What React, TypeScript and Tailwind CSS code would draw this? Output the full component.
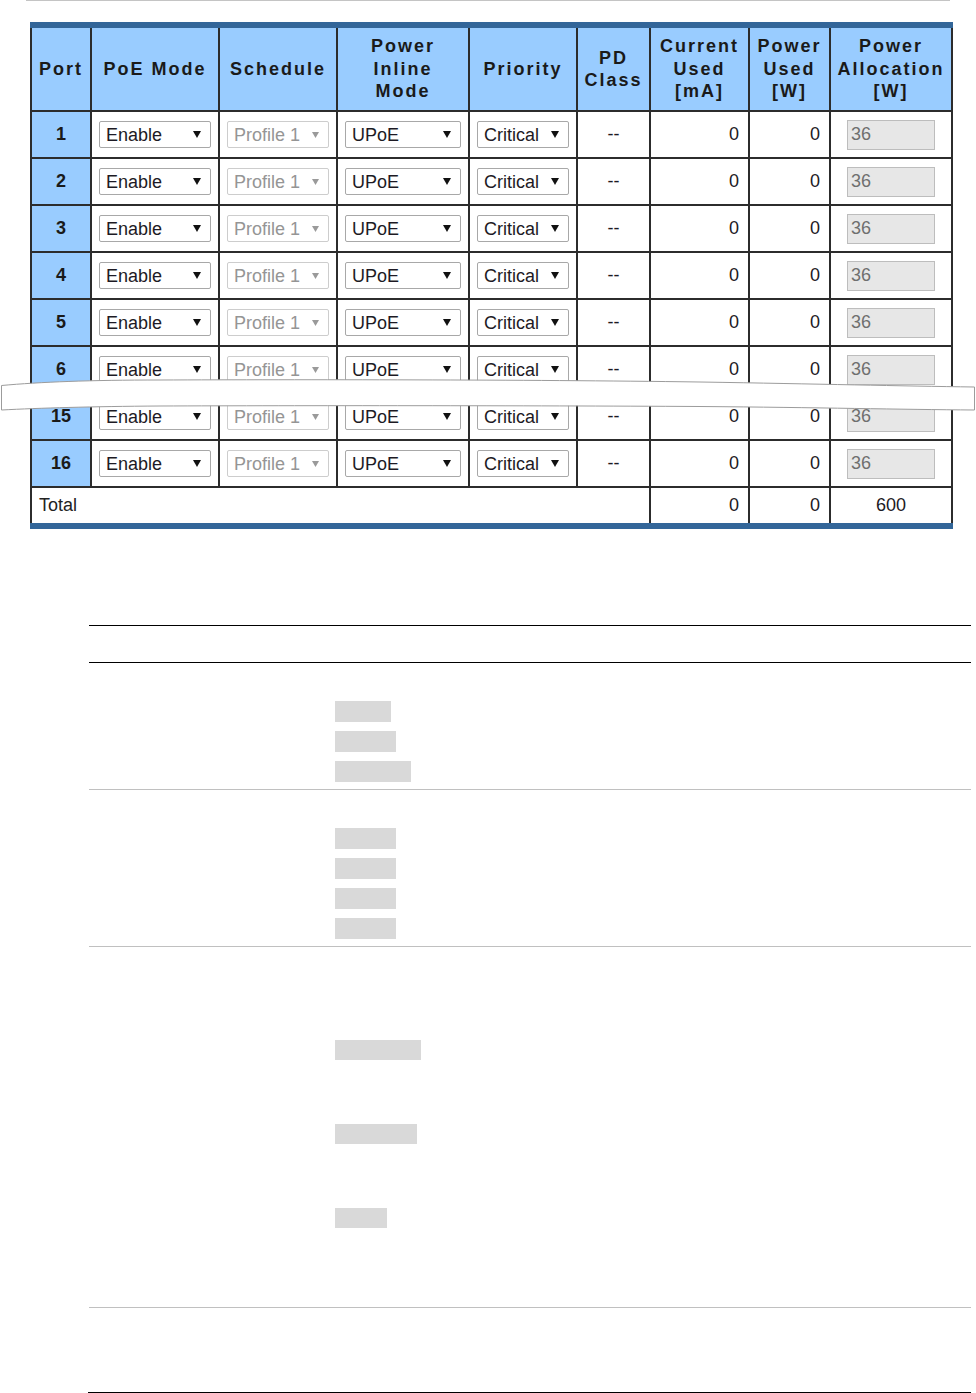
import type { ReactNode } from 'react'

const PORTS = ['1', '2', '3', '4', '5', '6', '15', '16']

const font = "font-['Liberation_Sans',Arial,sans-serif]"

function Arrow({ disabled }: { disabled?: boolean }) {
  return disabled ? (
    <svg width="7" height="6" viewBox="0 0 7 6" className="shrink-0">
      <polygon points="0,0 7,0 3.5,6" fill="#9a9a9a" />
    </svg>
  ) : (
    <svg width="8" height="7" viewBox="0 0 8 7" className="shrink-0">
      <polygon points="0,0 8,0 4,7" fill="#111" />
    </svg>
  )
}

function FakeSelect({ label, width, disabled }: { label: string; width: string; disabled?: boolean }) {
  return (
    <div
      className={[
        'flex h-[27px] items-center justify-between rounded-[2px] border bg-white pl-[6px] pr-[9px]',
        width,
        disabled ? 'border-[#cdcdcd] text-[#959595]' : 'border-[#a8a8a8] text-[#1d1a24]',
      ].join(' ')}
    >
      <span className="leading-none">{label}</span>
      <Arrow disabled={disabled} />
    </div>
  )
}

function Th({ children }: { children: ReactNode }) {
  return (
    <th className="border-2 border-[#2c2c2c] bg-[#99ccff] px-0 text-center align-middle text-[18px] font-bold leading-[22.5px] tracking-[2px] text-[#1a1a1a]">
      {children}
    </th>
  )
}

function Td({ children, className = '', colSpan }: { children?: ReactNode; className?: string; colSpan?: number }) {
  return (
    <td colSpan={colSpan} className={'border-2 border-[#2c2c2c] align-middle ' + className}>
      {children}
    </td>
  )
}

function BreakMark() {
  // torn-paper style cut between row 6 and row 15
  return (
    <svg className="absolute left-0 top-[376px]" width="976" height="38" viewBox="0 0 976 38">
      <path
        d="M1.5 9.5 C 40 6, 90 4, 160 4 C 300 3.5, 520 3.5, 700 6 C 820 8, 900 10, 974.5 11 L 974.5 34 C 900 33.5, 820 31.5, 700 30.5 C 520 29.5, 300 29.5, 160 30 C 90 30.5, 40 32, 1.5 34 Z"
        fill="#ffffff"
        stroke="#9c9c9c"
        strokeWidth="1"
      />
    </svg>
  )
}

function GreyBar({ width }: { width: string }) {
  return <div className={'bg-[#d9d9d9] ' + width} />
}

export default function App() {
  return (
    <div className={'relative min-h-[1393px] w-[976px] bg-white ' + font}>
      <div className="ml-[26px] h-px w-[924px] bg-[#c4c4c4]" />

      <table className="ml-[30px] mt-[21px] w-[921px] table-fixed border-collapse border-x-2 border-y-[6px] border-x-[#2c2c2c] border-y-[#336699]">
        <colgroup>
          <col className="w-[60px]" />
          <col className="w-[128px]" />
          <col className="w-[118px]" />
          <col className="w-[132px]" />
          <col className="w-[108px]" />
          <col className="w-[73px]" />
          <col className="w-[99px]" />
          <col className="w-[81px]" />
          <col className="w-[122px]" />
        </colgroup>
        <thead>
          <tr className="h-[86px]">
            <Th>Port</Th>
            <Th>PoE Mode</Th>
            <Th>Schedule</Th>
            <Th>
              Power
              <br />
              Inline
              <br />
              Mode
            </Th>
            <Th>Priority</Th>
            <Th>
              PD
              <br />
              Class
            </Th>
            <Th>
              Current
              <br />
              Used
              <br />
              [mA]
            </Th>
            <Th>
              Power
              <br />
              Used
              <br />
              [W]
            </Th>
            <Th>
              Power
              <br />
              Allocation
              <br />
              [W]
            </Th>
          </tr>
        </thead>
        <tbody className="text-[18px] text-[#1d1a24]">
          {PORTS.map((p) => (
            <tr key={p} className="h-[47px]">
              <Td className="bg-[#99ccff] text-center font-bold text-[#1a1a1a]">{p}</Td>
              <Td className="pl-[7px]">
                <FakeSelect label="Enable" width="w-[112px]" />
              </Td>
              <Td className="pl-[7px]">
                <FakeSelect label="Profile 1" width="w-[102px]" disabled />
              </Td>
              <Td className="pl-[7px]">
                <FakeSelect label="UPoE" width="w-[116px]" />
              </Td>
              <Td className="pl-[7px]">
                <FakeSelect label="Critical" width="w-[92px]" />
              </Td>
              <Td className="text-center">--</Td>
              <Td className="pr-[9px] text-right">0</Td>
              <Td className="pr-[9px] text-right">0</Td>
              <Td>
                <div className="mx-auto flex h-[30px] w-[88px] items-center border border-[#bdbdbd] bg-[#e7e7e7] pl-[3px] text-[#6f6f6f]">
                  36
                </div>
              </Td>
            </tr>
          ))}
          <tr className="h-[39px]">
            <Td colSpan={6} className="pl-[7px] text-[#222]">
              Total
            </Td>
            <Td className="pr-[9px] text-right">0</Td>
            <Td className="pr-[9px] text-right">0</Td>
            <Td className="text-center">600</Td>
          </tr>
        </tbody>
      </table>

      <BreakMark />

      <div className="ml-[89px] mt-[96px] w-[882px]">
        <div className="h-px bg-black" />
        <div className="h-[36px]" />
        <div className="h-px bg-black" />

        <div className="flex flex-col gap-[9px] pb-[7px] pl-[246px] pt-[38px]">
          <GreyBar width="h-[21px] w-[56px]" />
          <GreyBar width="h-[21px] w-[61px]" />
          <GreyBar width="h-[21px] w-[76px]" />
        </div>
        <div className="h-px bg-[#c0c0c0]" />

        <div className="flex flex-col gap-[9px] pb-[7px] pl-[246px] pt-[38px]">
          <GreyBar width="h-[21px] w-[61px]" />
          <GreyBar width="h-[21px] w-[61px]" />
          <GreyBar width="h-[21px] w-[61px]" />
          <GreyBar width="h-[21px] w-[61px]" />
        </div>
        <div className="h-px bg-[#c0c0c0]" />

        <div className="flex flex-col gap-[64px] pb-[79px] pl-[246px] pt-[93px]">
          <GreyBar width="h-[20px] w-[86px]" />
          <GreyBar width="h-[20px] w-[82px]" />
          <GreyBar width="h-[20px] w-[52px]" />
        </div>
        <div className="h-px bg-[#c0c0c0]" />

        <div className="h-[84px]" />
        <div className="-ml-px h-px bg-black" />
      </div>
    </div>
  )
}
